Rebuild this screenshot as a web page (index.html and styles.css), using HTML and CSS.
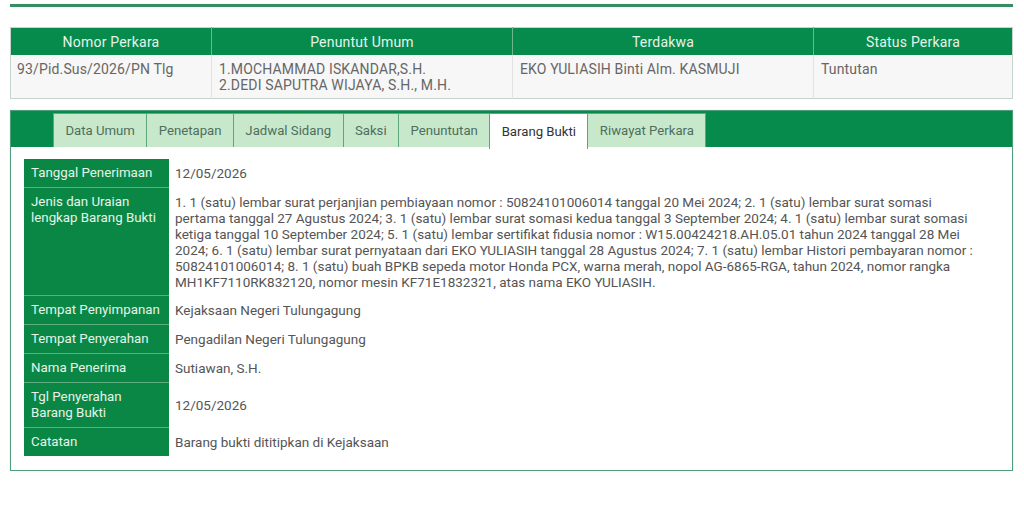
FILE: index.html
```html
<!DOCTYPE html>
<html lang="id">
<head>
<meta charset="utf-8">
<title>Barang Bukti</title>
<link rel="stylesheet" href="styles.css">
</head>
<body>
<div class="page">
  <div class="topline"></div>
  <table class="case">
    <thead>
      <tr>
        <th class="c1">Nomor Perkara</th>
        <th class="c2">Penuntut Umum</th>
        <th class="c3">Terdakwa</th>
        <th class="c4">Status Perkara</th>
      </tr>
    </thead>
    <tbody>
      <tr>
        <td>93/Pid.Sus/2026/PN Tlg</td>
        <td>1.MOCHAMMAD ISKANDAR,S.H.<br>2.DEDI SAPUTRA WIJAYA, S.H., M.H.</td>
        <td>EKO YULIASIH Binti Alm. KASMUJI</td>
        <td>Tuntutan</td>
      </tr>
    </tbody>
  </table>

  <div class="panel">
    <div class="tabs">
      <div class="tab">Data Umum</div>
      <div class="tab">Penetapan</div>
      <div class="tab">Jadwal Sidang</div>
      <div class="tab">Saksi</div>
      <div class="tab">Penuntutan</div>
      <div class="tab active">Barang Bukti</div>
      <div class="tab">Riwayat Perkara</div>
    </div>
    <div class="content">
      <table class="detail">
        <tr>
          <th>Tanggal Penerimaan</th>
          <td>12/05/2026</td>
        </tr>
        <tr>
          <th>Jenis dan Uraian lengkap Barang Bukti</th>
          <td>1. 1 (satu) lembar surat perjanjian pembiayaan nomor : 50824101006014 tanggal 20 Mei 2024; 2. 1 (satu) lembar surat somasi pertama tanggal 27 Agustus 2024; 3. 1 (satu) lembar surat somasi kedua tanggal 3 September 2024; 4. 1 (satu) lembar surat somasi ketiga tanggal 10 September 2024; 5. 1 (satu) lembar sertifikat fidusia nomor : W15.00424218.AH.05.01 tahun 2024 tanggal 28 Mei 2024; 6. 1 (satu) lembar surat pernyataan dari EKO YULIASIH tanggal 28 Agustus 2024; 7. 1 (satu) lembar Histori pembayaran nomor : 50824101006014; 8. 1 (satu) buah BPKB sepeda motor Honda PCX, warna merah, nopol AG-6865-RGA, tahun 2024, nomor rangka MH1KF7110RK832120, nomor mesin KF71E1832321, atas nama EKO YULIASIH.</td>
        </tr>
        <tr>
          <th>Tempat Penyimpanan</th>
          <td>Kejaksaan Negeri Tulungagung</td>
        </tr>
        <tr>
          <th>Tempat Penyerahan</th>
          <td>Pengadilan Negeri Tulungagung</td>
        </tr>
        <tr>
          <th>Nama Penerima</th>
          <td>Sutiawan, S.H.</td>
        </tr>
        <tr>
          <th>Tgl Penyerahan Barang Bukti</th>
          <td>12/05/2026</td>
        </tr>
        <tr>
          <th>Catatan</th>
          <td>Barang bukti dititipkan di Kejaksaan</td>
        </tr>
      </table>
    </div>
  </div>
</div>
</body>
</html>
```

FILE: styles.css
```css
html, body {
  margin: 0;
  padding: 0;
  background: #ffffff;
}

body {
  font-family: Roboto, "Liberation Sans", Arial, sans-serif;
  color: #5a5a5a;
}

.page {
  width: 1003px;
  padding: 4px 0 0 10px;
}

.topline {
  height: 3px;
  background: #3a8c65;
  box-shadow: 0 0 1px #9fd3b8;
}

.case {
  margin-top: 20px;
  width: 1003px;
  border-collapse: collapse;
  table-layout: fixed;
  border: 1px solid #c4d4cc;
}

.case th {
  background: #068b4c;
  color: #e4f4ea;
  font-weight: normal;
  font-size: 14px;
  letter-spacing: 0.2px;
  height: 27px;
  padding: 0;
  text-align: center;
  border-left: 1px solid #6fb58f;
}

.case th:first-child { border-left: none; }

.case .c1 { width: 200px; }
.case .c2 { width: 300px; }
.case .c3 { width: 300px; }

.case td {
  background: #f7f7f7;
  color: #666666;
  font-size: 14px;
  letter-spacing: 0.15px;
  line-height: 16px;
  vertical-align: top;
  padding: 6px 7px 5px 7px;
  border-left: 1px solid #e2e2e2;
}

.case td:first-child {
  padding-left: 6px;
  border-left: none;
}

.panel {
  margin-top: 11px;
  border: 1px solid #4f9f7c;
  box-shadow: 0 0 1px #9fd3b8;
}

.tabs {
  display: flex;
  background: #068b4c;
  padding: 2px 0 0 42px;
  height: 34px;
}

.tab {
  display: flex;
  align-items: center;
  padding: 0 11.4px 0 11.4px;
  background: #c8e8cc;
  color: #4f6e5b;
  font-size: 13.2px;
  border: 1px solid #5ea77a;
  border-bottom: none;
  margin-left: -1px;
}

.tab:first-child { margin-left: 0; }

.tab.active {
  background: #ffffff;
  color: #333333;
  height: 35px;
}

.content {
  background: #ffffff;
  padding: 12px 13px 14px 13px;
}

.detail {
  width: 100%;
  border-collapse: collapse;
}

.detail th {
  width: 132px;
  background: #0a8744;
  color: #e6f4ea;
  font-weight: normal;
  font-size: 13.3px;
  line-height: 16px;
  text-align: left;
  vertical-align: top;
  padding: 6px 6px 6px 7px;
  border-top: 1px solid #5fae82;
}

.detail tr:first-child th { border-top: none; }

.detail td {
  font-size: 13.5px;
  line-height: 16px;
  color: #555555;
  vertical-align: middle;
  padding: 6px 23px 6px 6px;
}

.detail tr:nth-child(2) td { vertical-align: top; }
```
